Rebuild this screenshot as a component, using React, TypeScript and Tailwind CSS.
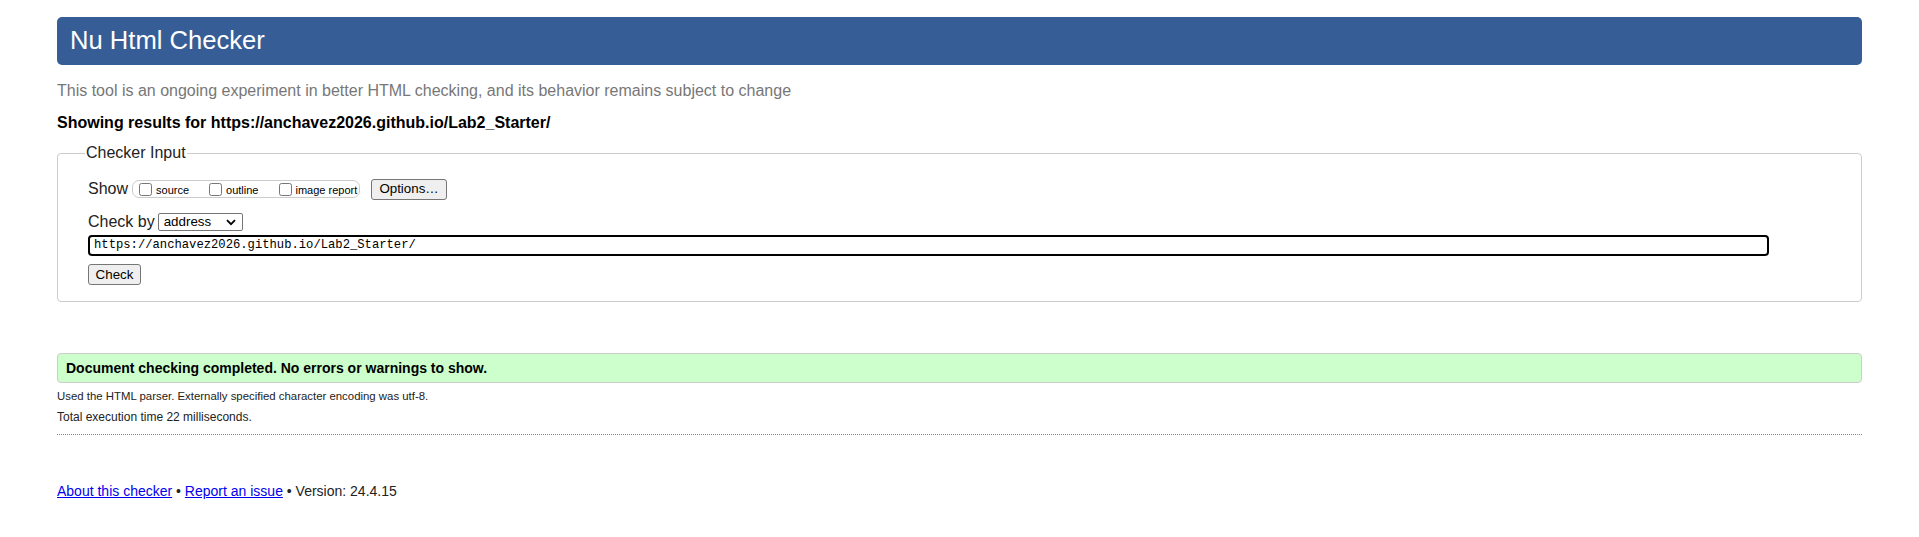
import React from "react";

export default function App() {
  return (
    <div className="min-h-[537px] w-[1919px] bg-white px-[57px] pt-[17px] text-black" style={{ fontFamily: '"Liberation Sans", Arial, sans-serif' }}>
      <div className="flex h-[48px] items-center rounded-[5px] bg-[#365d95] pl-[13px] text-[25.6px] leading-none text-white">
        Nu Html Checker
      </div>
      <p className="mt-[16px] text-[16px] leading-[20px] text-[#777]">
        This tool is an ongoing experiment in better HTML checking, and its behavior remains subject to change
      </p>
      <p className="mt-[12px] text-[16px] font-bold leading-[20px]">
        Showing results for https://anchavez2026.github.io/Lab2_Starter/
      </p>
      <fieldset className="mt-[11px] rounded-[4px] border border-[#ccc] pb-[16px] pl-[30px]">
        <legend className="-ml-[3px] px-[1px] text-[16px] leading-[18px] text-[#222]">Checker Input</legend>
        <div className="mt-[16px] flex h-[22px] items-center">
          <span className="text-[16px] leading-[20px] text-[#222]">Show</span>
          <div className="ml-[4px] flex h-[18px] w-[228px] items-center rounded-[7px] border border-[#ccc] pl-[6px] text-[11px]">
            <label className="flex items-center">
              <input type="checkbox" className="m-0 h-[13px] w-[13px]" />
              <span className="ml-[4px] mt-[2px]">source</span>
            </label>
            <label className="ml-[20px] flex items-center">
              <input type="checkbox" className="m-0 h-[13px] w-[13px]" />
              <span className="ml-[4px] mt-[2px]">outline</span>
            </label>
            <label className="ml-[21px] flex items-center">
              <input type="checkbox" className="m-0 h-[13px] w-[13px]" />
              <span className="ml-[3px] mt-[2px]">image report</span>
            </label>
          </div>
          <button className="ml-[11px] flex h-[21px] w-[76px] items-center justify-center rounded-[3px] border border-[#767676] bg-[#efefef] text-[13.33px] text-black">
            Options…
          </button>
        </div>
        <div className="mt-[12px] flex h-[20px] items-center">
          <span className="text-[16px] leading-[20px] text-[#222]">Check by</span>
          <div className="relative ml-[3px] flex h-[18px] w-[85px] items-center rounded-[2px] border border-[#767676] bg-white pl-[5px] text-[13.33px]">
            address
            <svg className="absolute right-[6px] top-[5px]" width="10" height="7" viewBox="0 0 10 7">
              <path d="M1 1.2 L5 5.2 L9 1.2" fill="none" stroke="#000" strokeWidth="1.8" />
            </svg>
          </div>
        </div>
        <div className="mt-[3px] flex h-[21px] w-[1681px] items-center rounded-[4px] border-2 border-black pl-[4px] text-[12.2px]" style={{ fontFamily: '"Liberation Mono", "DejaVu Sans Mono", monospace' }}>
          https://anchavez2026.github.io/Lab2_Starter/
        </div>
        <button className="mt-[8px] flex h-[21px] w-[53px] items-center justify-center rounded-[3px] border border-[#767676] bg-[#efefef] text-[13.33px] text-black">
          Check
        </button>
      </fieldset>
      <div className="mt-[51px] flex h-[30px] items-center rounded-[4px] border border-[#ccc] bg-[#ccffcc] pl-[8px] text-[14px] font-bold">
        Document checking completed. No errors or warnings to show.
      </div>
      <p className="mt-[6px] text-[11.4px] leading-[15px] text-[#222]">
        Used the HTML parser. Externally specified character encoding was utf-8.
      </p>
      <p className="mt-[6px] text-[12px] leading-[15px] text-[#222]">Total execution time 22 milliseconds.</p>
      <div className="mt-[9px] border-t border-dotted border-[#888]" />
      <p className="mt-[47px] text-[14px] leading-[18px] text-[#222]">
        <a href="#" className="text-[#0000ee] underline">About this checker</a>
        {" • "}
        <a href="#" className="text-[#0000ee] underline">Report an issue</a>
        {" • Version: 24.4.15"}
      </p>
    </div>
  );
}
